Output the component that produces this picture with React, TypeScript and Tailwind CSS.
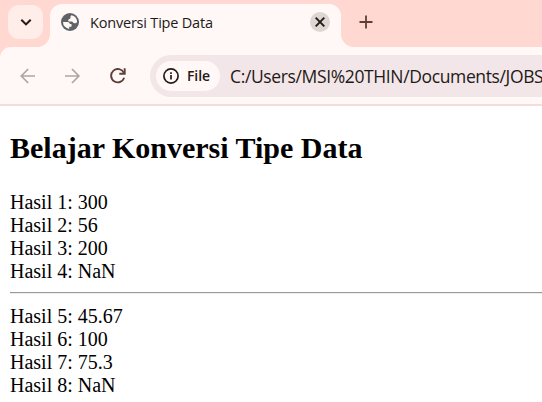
import React from "react";

const groups = [
  ["Hasil 1: 300", "Hasil 2: 56", "Hasil 3: 200", "Hasil 4: NaN"],
  ["Hasil 5: 45.67", "Hasil 6: 100", "Hasil 7: 75.3", "Hasil 8: NaN"],
];

function Globe() {
  return (
    <svg className="size-[18px] shrink-0" viewBox="0 0 18 18" fill="none">
      <circle cx="9" cy="9" r="9" fill="#5f6368" />
      <path
        d="M2 8.9h4.2c1.7 0 2.6.8 2.6 2.2h1.7v2.6H8.2v2.2A7 7 0 0 1 2 8.9Z"
        fill="#fff8f6"
      />
      <path
        d="M10.7 2.2A7 7 0 0 1 16 9.2c-.7.8-1.5 1-2.4 1-1.8 0-1.7-1.7-2.8-1.7H8.2c-1.4 0-1.4-2.4.3-2.6.9-.1 1-.7 1-1.6 0-1.2.4-1.8 1.2-2.1Z"
        fill="#fff8f6"
      />
    </svg>
  );
}

function TabStrip() {
  return (
    <div className="flex h-[47px] bg-[#ffd9d1]">
      <div className="ml-2 mt-[5px] flex h-[34px] w-[35px] shrink-0 items-center justify-center rounded-[11px] bg-[#ffede9]">
        <svg className="size-[12px]" viewBox="0 0 12 12" fill="none" stroke="#231917" strokeWidth="2.1">
          <path d="M1.3 3.8 6 8.4l4.7-4.6" />
        </svg>
      </div>
      <div className="relative ml-[7px] mt-1 flex h-[43px] w-[291px] items-start rounded-t-[12px] bg-[#fff8f6] pl-[11px] pt-[9px]">
        <svg className="absolute -left-[13px] bottom-0 size-[13px]" viewBox="0 0 13 13">
          <path d="M13 0v13H0A13 13 0 0 0 13 0Z" fill="#fff8f6" />
        </svg>
        <svg className="absolute -right-[13px] bottom-0 size-[13px]" viewBox="0 0 13 13">
          <path d="M0 0v13h13A13 13 0 0 1 0 0Z" fill="#fff8f6" />
        </svg>
        <Globe />
        <span className="ml-[11px] whitespace-nowrap text-[14.5px] leading-[19px] tracking-[-0.2px] text-[#231917]">
          Konversi Tipe Data
        </span>
        <span className="ml-auto mr-[11px] -mt-px flex size-5 items-center justify-center rounded-full bg-[#ddd7d3]">
          <svg className="size-[10px]" viewBox="0 0 10 10" stroke="#231917" strokeWidth="1.9">
            <path d="m.7.7 8.6 8.6M9.3.7.7 9.3" />
          </svg>
        </span>
      </div>
      <svg className="ml-[18px] mt-[15px] size-[14px]" viewBox="0 0 14 14" stroke="#5d4037" strokeWidth="1.8">
        <path d="M7 .5v13M.5 7h13" />
      </svg>
    </div>
  );
}

function Toolbar() {
  return (
    <div className="bg-[#ffd9d1]">
      <div className="flex h-[59px] items-start rounded-tl-[11px] border-b-2 border-[#f6dcd8] bg-[#fff8f6] pt-2">
        <div className="flex h-[42px] w-[150px] shrink-0 items-center pl-5">
          <svg className="size-[16px]" viewBox="0 0 16 16" fill="none" stroke="#b0a4a1" strokeWidth="1.7">
            <path d="M15 8H1.5M8.2 1 1.3 8l6.9 7" />
          </svg>
          <svg className="ml-[29px] size-[16px]" viewBox="0 0 16 16" fill="none" stroke="#b0a4a1" strokeWidth="1.7">
            <path d="M0 8h13.7M7 1l6.9 7L7 15" />
          </svg>
          <svg className="ml-[29px] size-[16px]" viewBox="0 0 16 16" fill="none" stroke="#5d4037" strokeWidth="1.9">
            <path d="M13.9 4.8A6.7 6.7 0 1 0 14.2 9.8" />
            <path d="M14.7.3v5.4H9.3" />
          </svg>
        </div>
        <div className="flex h-[42px] flex-1 items-center overflow-hidden rounded-l-[21px] bg-[#f2e6e8] pl-[6px]">
          <div className="flex h-[30px] w-[64px] shrink-0 items-center rounded-full bg-[#fff8f6] pl-[7px]">
            <svg className="size-[16px]" viewBox="0 0 16 16" fill="none" stroke="#231917" strokeWidth="1.7">
              <circle cx="8" cy="8" r="7.1" />
              <path d="M8 7v4.6M8 4.2v1.8" />
            </svg>
            <span className="ml-2 text-[14px] font-semibold leading-5 tracking-[-0.1px] text-[#231917]">File</span>
          </div>
          <span className="ml-[10px] whitespace-nowrap text-[17.5px] leading-6 tracking-[-0.37px] text-[#231917]">
            C:/Users/MSI%20THIN/Documents/JOBS
          </span>
        </div>
      </div>
    </div>
  );
}

export default function App() {
  return (
    <div className="h-[402px] w-[542px] overflow-hidden bg-white font-['Open_Sans','Noto_Sans',sans-serif]">
      <TabStrip />
      <Toolbar />
      <main className="pl-[10px] pt-[25px] font-['Liberation_Serif',serif] text-[20px] leading-[23px] text-black">
        <h2 className="mb-[26px] text-[30px] font-bold leading-[34px]">Belajar Konversi Tipe Data</h2>
        {groups.map((rows, i) => (
          <div key={i}>
            {i > 0 && <hr className="mb-[11px] mt-[9px] h-[2px] border-b border-t border-b-[#ededed] border-t-[#9a9a9a]" />}
            {rows.map((row) => (
              <div key={row}>{row}</div>
            ))}
          </div>
        ))}
      </main>
    </div>
  );
}
